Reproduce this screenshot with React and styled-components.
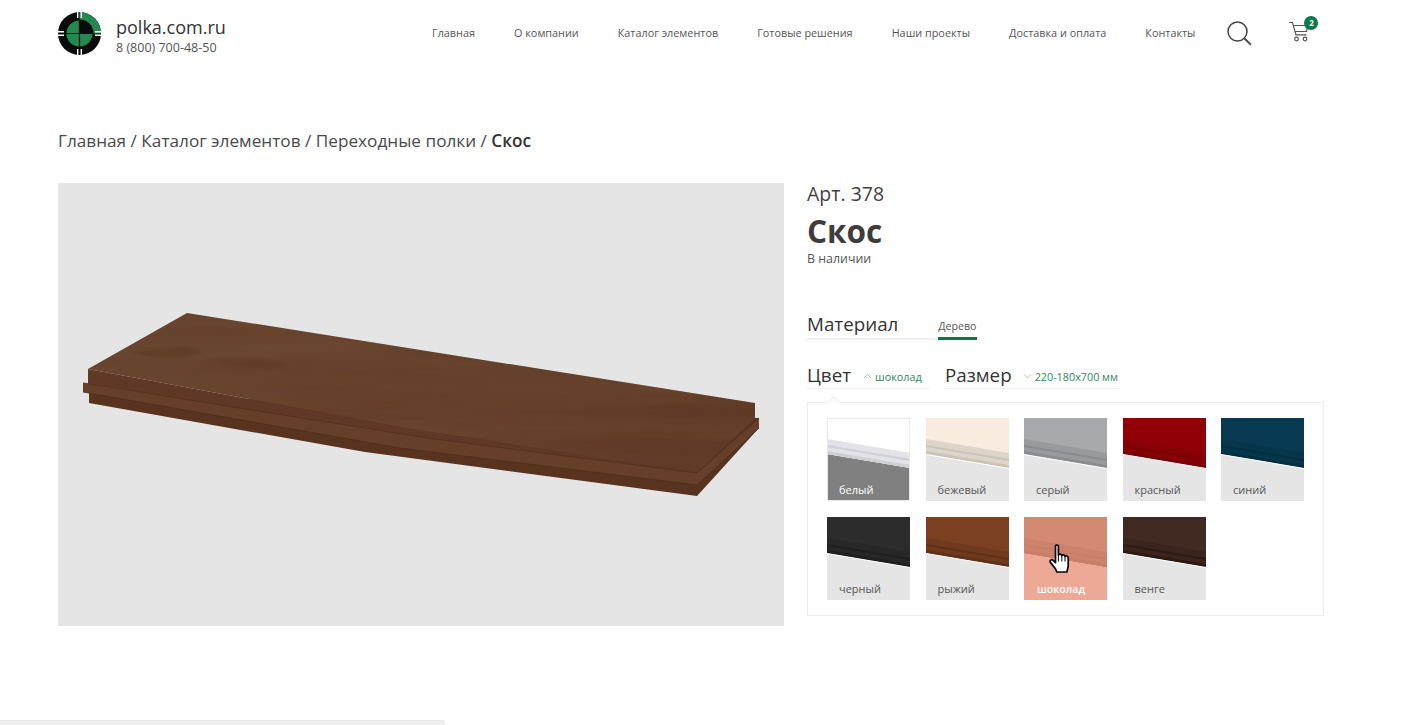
import React from "react";
import styled, { createGlobalStyle } from "styled-components";

const Global = createGlobalStyle`
  html, body { margin: 0; padding: 0; background: #fff; }
  body { font-family: "Open Sans", "Liberation Sans", sans-serif; color: #3f3f3f; overflow: hidden; }
`;

const Page = styled.div`
  width: 1410px;
  height: 725px;
  padding: 0 86px 0 58px;
  box-sizing: border-box;
  overflow: hidden;
`;

const Header = styled.header`
  display: flex;
  align-items: center;
  height: 66px;
`;

const Brand = styled.div`
  display: flex;
  align-items: center;
  gap: 15px;
  width: 374px;
  flex: none;
`;

const BrandText = styled.div`
  display: flex;
  flex-direction: column;
  gap: 3px;
  margin-top: 6px;
`;

const Domain = styled.div`
  font-size: 18px;
  line-height: 20px;
  color: #333;
`;

const Phone = styled.div`
  font-size: 12.5px;
  line-height: 16px;
  color: #555;
`;

const Nav = styled.nav`
  display: flex;
  gap: 39px;
  flex: none;
`;

const NavLink = styled.a`
  font-size: 10.85px;
  line-height: 16px;
  color: #555;
  white-space: nowrap;
`;

const Tools = styled.div`
  display: flex;
  align-items: center;
  margin-left: 32px;
  gap: 37px;
`;

const CartWrap = styled.div`
  position: relative;
  width: 30px;
  height: 28px;
`;

const Badge = styled.span`
  position: absolute;
  top: -3px;
  left: 15px;
  width: 14px;
  height: 14px;
  border-radius: 50%;
  background: #0a7a48;
  color: #fff;
  font-size: 8px;
  font-weight: 700;
  line-height: 14px;
  text-align: center;
`;

const Crumbs = styled.div`
  margin-top: 61px;
  font-size: 17.2px;
  line-height: 28px;
  color: #4a4a4a;
`;

const Current = styled.b`
  font-weight: 600;
  color: #333;
`;

const Main = styled.main`
  display: flex;
  gap: 23px;
  margin-top: 28px;
`;

const Photo = styled.div`
  width: 726px;
  height: 443px;
  flex: none;
  background: #e5e5e5;
`;

const Side = styled.section`
  width: 517px;
  flex: none;
`;

const Art = styled.div`
  font-size: 19.5px;
  line-height: 22px;
  color: #3f3f3f;
`;

const Title = styled.h1`
  margin: 5px 0 0;
  font-size: 31.5px;
  line-height: 42px;
  font-weight: 700;
  color: #3f3d3b;
`;

const Stock = styled.div`
  font-size: 12.4px;
  line-height: 16px;
  color: #555;
  margin-top: -1px;
`;

const MaterialRow = styled.div`
  display: flex;
  align-items: flex-end;
  width: 170px;
  height: 30px;
  margin-top: 41px;
  border-bottom: 2px solid #f0f0f0;
`;

const Heading = styled.span`
  font-size: 18.8px;
  line-height: 26px;
  color: #333;
  padding-bottom: ${(p) => p.$pb || 0}px;
`;

const Tab = styled.span`
  font-size: 10.6px;
  line-height: 16px;
  color: #555;
  margin-left: 40px;
  height: 25px;
  box-sizing: border-box;
  padding-top: 3px;
  border-bottom: 3px solid #0a7a48;
  margin-bottom: -2px;
  width: 39px;
`;

const Options = styled.div`
  display: flex;
  gap: 16px;
  margin-top: 16px;
`;

const Option = styled.div`
  display: flex;
  align-items: center;
  height: 33px;
  padding-top: 5px;
  border-bottom: 1px solid #f0f0f0;
  box-sizing: border-box;
  width: ${(p) => p.$w}px;
`;

const Value = styled.span`
  display: flex;
  align-items: center;
  gap: 3px;
  margin-left: ${(p) => p.$ml}px;
  margin-top: 3px;
  font-size: 10.8px;
  color: #2f8a62;
  white-space: nowrap;
`;

const Panel = styled.div`
  position: relative;
  margin-top: 13px;
  height: 214px;
  box-sizing: border-box;
  border: 1px solid #ececec;
  padding: 15px 19px;
  display: grid;
  grid-template-columns: repeat(5, 83px);
  grid-auto-rows: 83px;
  column-gap: 15.5px;
  row-gap: 16px;
`;

const Notch = styled.span`
  position: absolute;
  top: -5px;
  left: 21px;
  width: 8px;
  height: 8px;
  background: #fff;
  border-top: 1px solid #ececec;
  border-left: 1px solid #ececec;
  transform: rotate(45deg);
`;

const Swatch = styled.div`
  position: relative;
  width: 83px;
  height: 83px;
  background: ${(p) => p.$ground};
`;

const SwatchArt = styled.svg`
  display: block;
  width: 83px;
  height: 83px;
`;

const SwatchLabel = styled.span`
  position: absolute;
  left: ${(p) => (p.$active ? 13 : 12)}px;
  bottom: 3px;
  font-size: ${(p) => (p.$active ? 10.6 : 11)}px;
  line-height: 16px;
  font-weight: ${(p) => (p.$active ? 600 : 400)};
  color: ${(p) => p.$color};
`;

const HandCursor = styled.svg`
  position: absolute;
  left: 25px;
  top: 26px;
  width: 24px;
  height: 31px;
`;

const StatusBar = styled.div`
  position: fixed;
  left: 0;
  bottom: 0;
  width: 445px;
  height: 5px;
  background: #f0f0f0;
  border-top: 1px solid #e8e8e8;
  border-top-right-radius: 3px;
  box-sizing: border-box;
`;

const Logo = () => (
  <svg width="43" height="43" viewBox="0 0 43 43">
    <circle cx="21.5" cy="21.5" r="21.5" fill="#0b0b0b" />
    <path d="M21.5 21.5V0A21.5 21.5 0 0 1 43 21.5Z" fill="#23894f" />
    <circle cx="21.5" cy="21.5" r="14" fill="#0b0b0b" />
    <path d="M21.5 21.5V8.5A13 13 0 0 0 8.5 21.5Z" fill="#23894f" />
    <path d="M21.5 21.5H8.5A13 13 0 0 0 21.5 34.5Z" fill="#23894f" />
    <path d="M21.5 21.5V34.5A13 13 0 0 0 34.5 21.5Z" fill="#23894f" />
    <path d="M21.5 8.5V34.5M8.5 21.5H34.5" stroke="#0b0b0b" strokeWidth="1.2" />
    <path
      d="M19.7 0V6M23.3 0V6M19.7 37V43M23.3 37V43M0 19.7H6M0 23.3H6M37 19.7H43M37 23.3H43"
      stroke="#fff"
      strokeWidth="1.4"
    />
  </svg>
);

const SearchIcon = () => (
  <svg width="25" height="25" viewBox="0 0 25 25" fill="none" stroke="#444" strokeWidth="1.5">
    <circle cx="10.5" cy="10.5" r="9.5" />
    <path d="M17.5 17.5L24 23.8" strokeWidth="1.8" />
  </svg>
);

const CartIcon = () => (
  <svg width="30" height="28" viewBox="0 0 30 28" fill="none" stroke="#555" strokeWidth="1.2">
    <path d="M0 3.5H3.5L7 15.8H17.5" />
    <path d="M4.3 6.5H19L17.5 12.5H6" />
    <circle cx="7.5" cy="20" r="1.8" />
    <circle cx="16" cy="20" r="1.8" />
  </svg>
);

const Chevron = ({ up }) => (
  <svg width="9" height="6" viewBox="0 0 9 6" fill="none" stroke="#9cc4b1" strokeWidth="0.9">
    <path d={up ? "M1 5L4.5 1.5L8 5" : "M1 1.5L4.5 5L8 1.5"} />
  </svg>
);

const Hand = () => (
  <HandCursor viewBox="0 0 24 31">
    <path
      d="M6.5 3.2C6.5 1.6 9.4 1.6 9.4 3.2V12.2C9.8 10.6 12.6 10.8 12.8 12.6C13.3 11.4 15.8 11.6 16 13.4C16.6 12.6 19.2 12.8 19.2 14.8V23.5L17.8 29H7.8L6.6 26L1.4 19.4C0.4 17.6 2.4 15.8 4 17.2L6.5 19.6Z"
      fill="#fff"
      stroke="#050505"
      strokeWidth="1.7"
      strokeLinejoin="round"
    />
    <path d="M9.4 13V18.5M12.8 12.8V18.5M16 13.4V18.5" stroke="#050505" strokeWidth="1" fill="none" />
  </HandCursor>
);

const TOP = "187,313 755,403 755,418 697,473 400,427 88,369";

const Shelf = () => (
  <svg width="726" height="443" viewBox="58 183 726 443">
    <defs>
      <filter id="wood" x="0" y="0" width="100%" height="100%">
        <feTurbulence type="fractalNoise" baseFrequency="0.004 0.05" numOctaves="3" seed="7" />
        <feColorMatrix values="0 0 0 0 0.2  0 0 0 0 0.1  0 0 0 0 0.05  0.5 0 0 0 -0.16" />
        <feComposite in2="SourceGraphic" operator="in" />
      </filter>
      <filter id="soft">
        <feGaussianBlur stdDeviation="1.6" />
      </filter>
      <linearGradient id="topFace" x1="0" y1="0" x2="1" y2="0.2">
        <stop offset="0" stopColor="#66432f" />
        <stop offset="0.5" stopColor="#65402b" />
        <stop offset="1" stopColor="#5f3a26" />
      </linearGradient>
    </defs>
    <polygon points="89,393 89,403 365,452 697,496 759,428 759,418" fill="#583420" />
    <polygon points="83,383 83,392 400,448 697,485 759,428 759,418 697,473 427,438" fill="#663f2a" />
    <polygon points={TOP} fill="url(#topFace)" />
    <polygon points={TOP} fill="#000" filter="url(#wood)" />
    <path d="M127 352C160 351 188 342 200 351C192 360 158 361 127 352Z" fill="#55321e" opacity="0.4" filter="url(#soft)" />
    <path d="M205 358C240 358 272 357 288 367C268 372 232 368 205 358Z" fill="#55321e" opacity="0.25" filter="url(#soft)" />
    <polygon points="88,369 400,427 697,473 427,438 88,384" fill="#5f3926" />
    <path d="M83 383L427 438L697 473L759 418" fill="none" stroke="#56331f" strokeWidth="1" />
    <path d="M83 392L400 448L697 485L759 428" fill="none" stroke="#4f2e1c" strokeWidth="0.8" />
  </svg>
);

const swatches = [
  { name: "белый", top: "#ffffff", band: "#e2e2e8", dark: "#cfcfd6", ground: "#808080", label: "#fff", edge: "#e9e9e9" },
  { name: "бежевый", top: "#f9ecde", band: "#ddd5ca", dark: "#cbc3b6", ground: "#e5e5e5", label: "#555" },
  { name: "серый", top: "#a7a9ac", band: "#989a9d", dark: "#8a8c8f", ground: "#e5e5e5", label: "#555" },
  { name: "красный", top: "#900006", band: "#860005", dark: "#780005", ground: "#e5e5e5", label: "#555" },
  { name: "синий", top: "#073a50", band: "#06364a", dark: "#052f41", ground: "#e5e5e5", label: "#555" },
  { name: "черный", top: "#2c2c2c", band: "#272727", dark: "#1f1f1f", ground: "#e5e5e5", label: "#555" },
  { name: "рыжий", top: "#7b4021", band: "#703a1e", dark: "#5f3118", ground: "#e5e5e5", label: "#555" },
  { name: "шоколад", top: "#d38a72", band: "#cc826b", dark: "#c87e67", ground: "#eda995", label: "#fff", active: true },
  { name: "венге", top: "#412a22", band: "#3a241d", dark: "#2d1a14", ground: "#e5e5e5", label: "#555" },
];

const Thumb = ({ s }) => (
  <Swatch $ground={s.ground}>
    <SwatchArt viewBox="0 0 83 83">
      <polygon points="0,0 83,0 83,50 0,36" fill={s.top} />
      <polygon points="0,21 83,35 83,50 0,36" fill={s.band} />
      <polygon points="0,27 83,41 83,43 0,29" fill={s.dark} />
      <polygon points="0,33 83,47 83,50 0,36" fill={s.dark} />
      {s.ground === "#e5e5e5" && <polygon points="0,36 83,50 83,51 0,37" fill="#fff" />}
      {s.edge && <rect x="0.5" y="0.5" width="82" height="82" fill="none" stroke={s.edge} />}
    </SwatchArt>
    <SwatchLabel $color={s.label} $active={s.active}>{s.name}</SwatchLabel>
    {s.active && <Hand />}
  </Swatch>
);

const nav = ["Главная", "О компании", "Каталог элементов", "Готовые решения", "Наши проекты", "Доставка и оплата", "Контакты"];

export default function App() {
  return (
    <Page>
      <Global />
      <Header>
        <Brand>
          <Logo />
          <BrandText>
            <Domain>polka.com.ru</Domain>
            <Phone>8 (800) 700-48-50</Phone>
          </BrandText>
        </Brand>
        <Nav>
          {nav.map((n) => (
            <NavLink key={n}>{n}</NavLink>
          ))}
        </Nav>
        <Tools>
          <SearchIcon />
          <CartWrap>
            <CartIcon />
            <Badge>2</Badge>
          </CartWrap>
        </Tools>
      </Header>
      <Crumbs>
        Главная / Каталог элементов / Переходные полки / <Current>Скос</Current>
      </Crumbs>
      <Main>
        <Photo>
          <Shelf />
        </Photo>
        <Side>
          <Art>Арт. 378</Art>
          <Title>Скос</Title>
          <Stock>В наличии</Stock>
          <MaterialRow>
            <Heading $pb={1}>Материал</Heading>
            <Tab>Дерево</Tab>
          </MaterialRow>
          <Options>
            <Option $w={122}>
              <Heading>Цвет</Heading>
              <Value $ml={12}>
                <Chevron up />
                шоколад
              </Value>
            </Option>
            <Option $w={174}>
              <Heading>Размер</Heading>
              <Value $ml={11}>
                <Chevron />
                220-180x700 мм
              </Value>
            </Option>
          </Options>
          <Panel>
            <Notch />
            {swatches.map((s) => (
              <Thumb key={s.name} s={s} />
            ))}
          </Panel>
        </Side>
      </Main>
      <StatusBar />
    </Page>
  );
}
